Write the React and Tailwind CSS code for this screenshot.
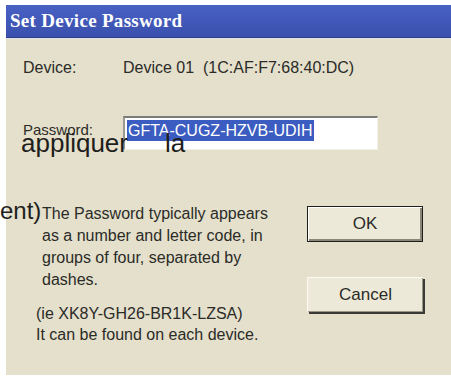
const App = () => {
  return (
    <div className="relative w-[451px] h-[378px] overflow-hidden bg-white font-['Liberation_Sans',Arial,sans-serif] text-[#2b2b28]">
      <div className="ml-[6px] mt-[5px] flex h-[370px] w-[445px] flex-col">
        {/* title bar */}
        <div className="flex h-[33px] items-center bg-gradient-to-b from-[#4861c4] to-[#3a50ad] pl-[4px] border-b border-[#2e3f8a]">
          <span className="font-['Liberation_Serif',serif] text-[19px] font-bold tracking-[0.3px] text-white">
            Set Device Password
          </span>
        </div>
        <div className="h-[1px] bg-[#dfe2e6]" />

        {/* body */}
        <div className="flex-1 bg-[#e4e0cb] pl-[17px] pt-[19px]">
          <div className="flex h-[20px] items-center text-[16px]">
            <span className="w-[100px]">Device:</span>
            <span>Device 01&nbsp;&nbsp;(1C:AF:F7:68:40:DC)</span>
          </div>

          <div className="mt-[38px] flex items-start">
            <span className="w-[100px] pt-[3px] text-[15px]">Password:</span>
            <div className="h-[34px] w-[255px] border-l-2 border-t-2 border-r border-b border-l-[#9a9a94] border-t-[#7c7c78] border-r-[#f3f1e6] border-b-[#f3f1e6] bg-white pl-[2px] pt-[1px]">
              <span className="inline-block bg-[#3b5cc0] px-[1px] text-[16px] leading-[21px] text-white">
                GFTA-CUGZ-HZVB-UDIH
              </span>
            </div>
          </div>

          <div className="mt-[53px] flex">
            <div className="w-[284px] pl-[19px] text-[16px]">
              <p className="leading-[22px]">
                The Password typically appears
                <br />
                as a number and letter code, in
                <br />
                groups of four, separated by
                <br />
                dashes.
              </p>
              <p className="mt-[12px] -ml-[6px] leading-[21px]">
                (ie XK8Y-GH26-BR1K-LZSA)
                <br />
                It can be found on each device.
              </p>
            </div>
            <div className="flex flex-col gap-[35px] pt-[3px]">
              <button className="h-[36px] w-[116px] border border-[#1e1e1c] bg-[#ece9d8] text-[17px] shadow-[inset_1px_1px_0_#ffffff,inset_-2px_-2px_0_#8a8778]">
                OK
              </button>
              <button className="h-[35px] w-[116px] border-t border-l border-[#fbfaf3] bg-[#ece9d8] text-[17px] shadow-[2px_2px_0_#3a3a36,inset_-1px_-1px_0_#9a9788]">
                Cancel
              </button>
            </div>
          </div>
        </div>
      </div>

      {/* overlaid translation fragments */}
      <span className="absolute left-[21px] top-[130px] text-[26px] leading-none text-[#1e1e1c]">appliquer</span>
      <span className="absolute left-[165px] top-[130px] text-[26px] leading-none text-[#1e1e1c]">la</span>
      <span className="absolute left-[0px] top-[199px] text-[24px] leading-none text-[#1e1e1c]">ent)</span>
    </div>
  );
};

export default App;
